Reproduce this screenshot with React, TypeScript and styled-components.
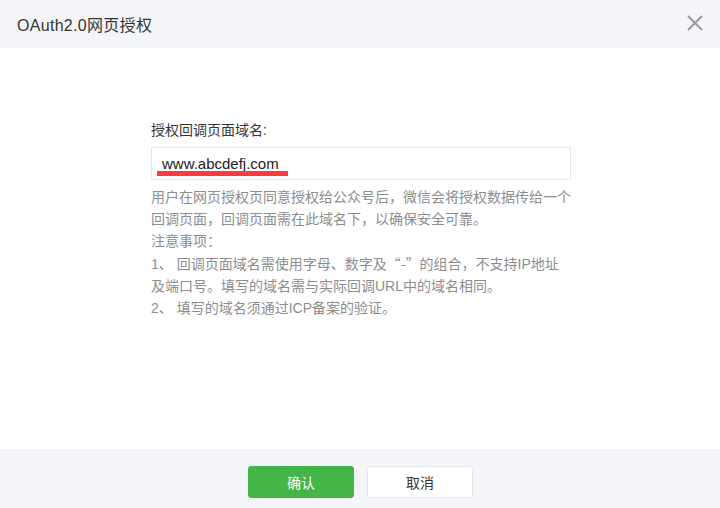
import * as React from "react";
import styled, { createGlobalStyle } from "styled-components";

const GlobalStyle = createGlobalStyle`
  html, body {
    margin: 0;
    padding: 0;
    background: #ffffff;
  }
  body {
    font-family: "Liberation Sans", "Noto Sans CJK SC", sans-serif;
    color: #353535;
  }
`;

const Dialog = styled.div`
  width: 720px;
  height: 508px;
  display: flex;
  flex-direction: column;
  overflow: hidden;
  background: #fff;
`;

const Header = styled.div`
  height: 48px;
  flex: none;
  display: flex;
  align-items: center;
  justify-content: space-between;
  padding: 0 15px 0 17px;
  background: #f4f5f9;
`;

const Title = styled.h3`
  margin: 0;
  font-size: 16px;
  font-weight: normal;
  letter-spacing: 0.3px;
  color: #353535;
`;

const CloseButton = styled.button`
  width: 20px;
  height: 20px;
  padding: 0;
  border: 0;
  background: transparent;
  display: flex;
  align-items: center;
  justify-content: center;
  cursor: pointer;
  margin-top: -2px;
`;

const Body = styled.div`
  flex: 1;
  display: flex;
  justify-content: center;
  padding-top: 71px;
  padding-left: 2px;
`;

const Form = styled.div`
  width: 420px;
  display: flex;
  flex-direction: column;
`;

const Label = styled.label`
  font-size: 14px;
  line-height: 22px;
  color: #353535;
`;

const InputWrap = styled.div`
  position: relative;
  margin-top: 6px;
`;

const Input = styled.div`
  height: 31px;
  border: 1px solid #e7e7eb;
  padding: 0 10px;
  display: flex;
  align-items: center;
  font-size: 15px;
  color: #222;
`;

const Highlight = styled.span`
  position: absolute;
  left: 6px;
  top: 24px;
  width: 131px;
  height: 5px;
  background: #fb3b3b;
`;

const Desc = styled.div`
  margin-top: 6px;
  font-size: 14px;
  line-height: 22px;
  color: #8d8d8d;
`;

const Wide = styled.span`
  font-family: "Noto Sans CJK SC", sans-serif;
`;

const Footer = styled.div`
  flex: none;
  height: 59px;
  display: flex;
  justify-content: center;
  align-items: flex-start;
  gap: 13px;
  padding-top: 17px;
  padding-left: 1px;
  box-sizing: border-box;
  background: #f4f5f9;
`;

const Button = styled.button<{ $primary?: boolean }>`
  width: 106px;
  height: 32px;
  border-radius: 3px;
  font-family: inherit;
  font-size: 14px;
  cursor: pointer;
  border: 1px solid ${(p) => (p.$primary ? "#44b549" : "#e4e8eb")};
  background: ${(p) => (p.$primary ? "#44b549" : "#ffffff")};
  color: ${(p) => (p.$primary ? "#ffffff" : "#353535")};
`;

export default function App() {
  return (
    <>
      <GlobalStyle />
      <Dialog>
        <Header>
          <Title>OAuth2.0网页授权</Title>
          <CloseButton aria-label="关闭">
            <svg width="16" height="16" viewBox="0 0 16 16">
              <path
                d="M1 1 L15 15 M15 1 L1 15"
                stroke="#9a9a9a"
                strokeWidth="2"
                fill="none"
              />
            </svg>
          </CloseButton>
        </Header>
        <Body>
          <Form>
            <Label>授权回调页面域名:</Label>
            <InputWrap>
              <Input>www.abcdefj.com</Input>
              <Highlight />
            </InputWrap>
            <Desc>
              用户在网页授权页同意授权给公众号后，微信会将授权数据传给一个
              <br />
              回调页面，回调页面需在此域名下，以确保安全可靠。
              <br />
              注意事项：
              <br />
              1、 回调页面域名需使用字母、数字及<Wide>“-”</Wide>的组合，不支持IP地址
              <br />
              及端口号。填写的域名需与实际回调URL中的域名相同。
              <br />
              2、 填写的域名须通过ICP备案的验证。
            </Desc>
          </Form>
        </Body>
        <Footer>
          <Button $primary>确认</Button>
          <Button>取消</Button>
        </Footer>
      </Dialog>
    </>
  );
}
